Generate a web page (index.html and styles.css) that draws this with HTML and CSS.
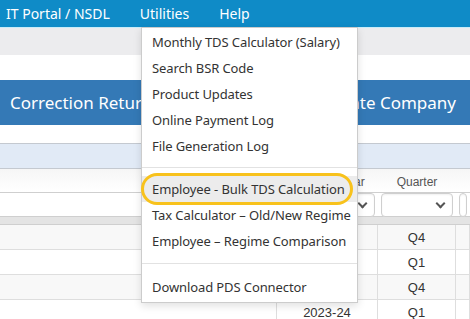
FILE: index.html
```html
<!DOCTYPE html>
<html lang="en">
<head>
  <meta charset="UTF-8" />
  <title>TDS Utilities</title>
  <link rel="stylesheet" href="styles.css">
</head>
<body>

  <nav class="topbar">
    <a class="top-link" href="#">IT Portal / NSDL</a>
    <a class="top-link" href="#">Utilities</a>
    <a class="top-link" href="#">Help</a>
  </nav>

  <div class="subbar"></div>
  <div class="gap-row"></div>

  <div class="titlebar">
    <span class="title-tab">Correction Returns</span>
    <span class="title-tab">Update Company</span>
  </div>

  <div class="gap-row short"></div>
  <div class="info-band"></div>

  <div class="grid">
    <div class="grid-head">
      <div class="cell"></div>
      <div class="cell label year">Year</div>
      <div class="cell label">Quarter</div>
      <div class="cell"></div>
    </div>
    <div class="grid-filter">
      <div class="cell"></div>
      <div class="cell"><div class="select"><span class="chev"></span></div></div>
      <div class="cell"><div class="select"><span class="chev"></span></div></div>
      <div class="cell"><div class="select"></div></div>
    </div>
    <div class="grid-sep"></div>
    <div class="grid-row">
      <div class="cell"></div><div class="cell num">2023-24</div><div class="cell num">Q4</div><div class="cell"></div>
    </div>
    <div class="grid-row">
      <div class="cell"></div><div class="cell num">2024-25</div><div class="cell num">Q1</div><div class="cell"></div>
    </div>
    <div class="grid-row">
      <div class="cell"></div><div class="cell num">2023-24</div><div class="cell num">Q4</div><div class="cell"></div>
    </div>
    <div class="grid-row">
      <div class="cell"></div><div class="cell num">2023-24</div><div class="cell num">Q1</div><div class="cell"></div>
    </div>
  </div>

  <ul class="menu">
    <li class="menu-item">Monthly TDS Calculator (Salary)</li>
    <li class="menu-item">Search BSR Code</li>
    <li class="menu-item">Product Updates</li>
    <li class="menu-item">Online Payment Log</li>
    <li class="menu-item">File Generation Log</li>
    <li class="menu-divider"></li>
    <li class="menu-item active">Employee - Bulk TDS Calculation</li>
    <li class="menu-item">Tax Calculator – Old/New Regime</li>
    <li class="menu-item">Employee – Regime Comparison</li>
    <li class="menu-divider last"></li>
    <li class="menu-item">Download PDS Connector</li>
  </ul>

</body>
</html>
```

FILE: styles.css
```css
body {
  margin: 0;
  font-family: "Noto Sans", "Open Sans", sans-serif;
  color: #333;
  overflow: hidden;
}

.topbar {
  height: 27px;
  background-color: #0f8bc7;
  display: flex;
  align-items: center;
  padding-left: 6px;
  gap: 30px;
}
.top-link {
  color: white;
  text-decoration: none;
  font-size: 14px;
}

.subbar {
  height: 27px;
  background-color: #ececee;
  border-top: 1px solid #c9ecf8;
}
.gap-row {
  height: 25px;
  background: white;
}
.gap-row.short {
  height: 18px;
}

.titlebar {
  height: 45px;
  background-color: #3479b6;
  display: flex;
  align-items: center;
  justify-content: space-between;
  padding: 0 14px 0 10px;
}
.title-tab {
  color: white;
  font-size: 17px;
}

.info-band {
  height: 24px;
  background-color: #e1eaf6;
  border-top: 1px solid #c4c9d0;
  border-bottom: 1px solid #c4c9d0;
}

/* grid */
.grid-head, .grid-filter, .grid-row {
  display: grid;
  grid-template-columns: 277px 101px 78px 1fr;
}
.grid-head {
  height: 23px;
  border-bottom: 1px solid #cfcfcf;
  background: linear-gradient(#f6f6f6, #ffffff);
}
.grid-filter {
  height: 23px;
}
.grid-sep {
  height: 7px;
  background-color: #e4e4e4;
  border-top: 1px solid #cfcfcf;
  border-bottom: 1px solid #cfcfcf;
}
.grid-row {
  height: 24px;
  border-bottom: 1px solid #dedede;
}
.grid-row:nth-child(even) {
  background-color: #f8f8f8;
}
.grid-row .cell {
  border-right: 1px solid #dedede;
}
.cell {
  display: flex;
  align-items: center;
  justify-content: center;
  font-family: "Liberation Sans", Arial, sans-serif;
  font-size: 13px;
}
.label {
  color: #555;
  font-size: 12px;
  padding-top: 2px;
}
.label.year {
  padding-left: 50px;
}
.num {
  color: #333;
}
.grid-filter .cell {
  padding: 0 3px;
}
.select {
  flex: 1;
  height: 22px;
  border: 1px solid #cfcfcf;
  border-radius: 4px;
  background: white;
  box-shadow: inset 0 1px 2px rgba(0,0,0,0.06);
  position: relative;
}
.chev {
  position: absolute;
  right: 8px;
  top: 6px;
  width: 5px;
  height: 5px;
  border-right: 2px solid #555;
  border-bottom: 2px solid #555;
  transform: rotate(45deg);
}

/* dropdown */
.menu {
  position: absolute;
  left: 141px;
  top: 27px;
  width: 215px;
  margin: 0;
  padding: 1px 0 2px;
  list-style: none;
  background: white;
  border: 1px solid #cccccc;
  box-shadow: 0 3px 8px rgba(0,0,0,0.12);
}
.menu-item {
  height: 26px;
  line-height: 26px;
  padding-left: 10px;
  font-size: 13px;
  letter-spacing: -0.1px;
  color: #333;
  white-space: nowrap;
  position: relative;
}
.menu-item.active {
  background-color: #ececec;
}
.menu-item.active::after {
  content: "";
  position: absolute;
  left: -1px;
  right: 4px;
  top: -3px;
  bottom: -3px;
  border: 3.5px solid #f8c21c;
  border-radius: 16px;
}
.menu-divider {
  height: 1px;
  background-color: #e2e2e2;
  margin: 8px 0;
}
.menu-divider.last {
  margin: 9px 0 10px;
}
```
